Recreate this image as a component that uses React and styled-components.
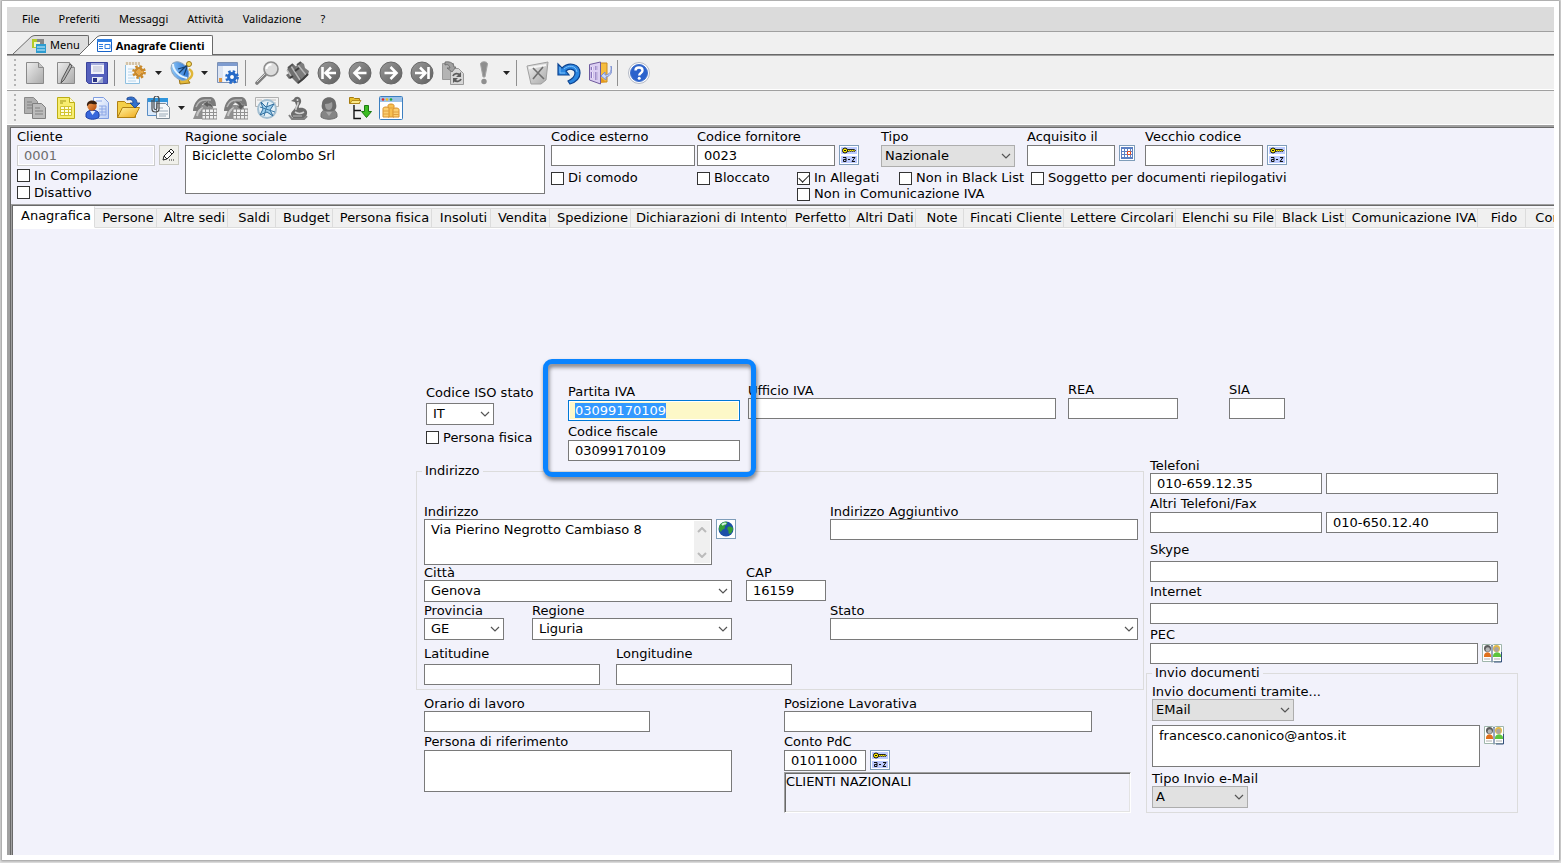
import React, { useEffect, useId, useRef } from 'react';
import styled, { createGlobalStyle, css } from 'styled-components';

const GlobalStyle = createGlobalStyle`
  * {
    box-sizing: border-box;
  }
  body {
    margin: 0;
    background: #dedede;
    color: #000;
    font-family: 'DejaVu Sans', Verdana, sans-serif;
    font-size: 13px;
    line-height: 14px;
  }
  button, input, select, textarea {
    font: inherit;
    color: inherit;
    margin: 0;
  }
`;

/* ---------- window ---------- */

const Page = styled.div`
  min-height: 100vh;
  padding: 1px 2px 3px;
  display: flex;
`;

const Frame = styled.div`
  flex: 1;
  min-width: 0;
  display: flex;
  flex-direction: column;
  padding: 6px 5px 5px;
  background: #fff;
  box-shadow: 0 0 2px 1px #9a9a9a;
`;

const MenuBar = styled.nav`
  display: flex;
  height: 25px;
  padding-left: 5px;
  background: #dbdbdb;
  border-bottom: 1px solid #a0a0a0;
`;

const MenuItem = styled.button`
  padding: 0 9px 0 10px;
  border: 0;
  background: none;
  font-family: 'Noto Sans', 'Open Sans', sans-serif;
  font-size: 11px;
`;

const DocTabs = styled.div`
  display: flex;
  align-items: flex-end;
  height: 23px;
  padding-left: 6px;
  background: #f0f0f0;
  border-bottom: 1px solid #696969;
`;

const DocTabButton = styled.button`
  display: flex;
  height: ${(p) => (p.$active ? '20px' : '19px')};
  padding: 0;
  margin-left: ${(p) => (p.$active ? '-10px' : '0')};
  margin-bottom: ${(p) => (p.$active ? '-1px' : '0')};
  border: 0;
  background: none;
  font-family: 'Noto Sans', 'Open Sans', sans-serif;
  font-size: 11px;
  font-weight: ${(p) => (p.$active ? 700 : 400)};
`;

const DocTabBody = styled.span`
  display: flex;
  align-items: center;
  gap: 4px;
  height: 100%;
  padding-right: 8px;
  white-space: nowrap;
  background: ${(p) => (p.$active ? '#fff' : '#dedede')};
  border-top: 1px solid #696969;
  border-right: 1px solid #696969;
  border-top-right-radius: 2px;

  svg {
    margin-left: -4px;
  }
`;

const Toolbar = styled.div`
  display: flex;
  align-items: center;
  height: 35px;
  padding-left: 7px;
  background: #f0f0f0;
  border-top: 1px solid #a0a0a0;
  border-bottom: 1px solid #fff;
`;

const Grip = styled.span`
  width: 2px;
  height: 27px;
  margin-right: 3px;
  background: repeating-linear-gradient(#b4b4b4 0 2px, transparent 2px 5px);
`;

const ToolButton = styled.button`
  display: flex;
  align-items: center;
  justify-content: center;
  width: ${(p) => (p.$arrow ? '15px' : '31px')};
  height: 28px;
  padding: 0;
  border: 0;
  background: none;
`;

const Separator = styled.span`
  width: 1px;
  height: 26px;
  margin: 0 5px 0 2px;
  background: #909090;
`;

const Workspace = styled.main`
  flex: 1;
  display: flex;
  flex-direction: column;
  background: #f2f2fb;
  border-top: 2px solid #a0a0a0;
  border-left: 3px solid #a0a0a0;
  box-shadow: inset 1px 1px 0 #696969;
`;

/* ---------- fields ---------- */

const FieldBox = styled.div`
  display: flex;
  flex-direction: column;
  gap: ${(p) => p.$gap || 0}px;
  margin-top: ${(p) => p.$top || 0}px;
  margin-left: ${(p) => p.$left || 0}px;
`;

const Label = styled.label`
  white-space: nowrap;
`;

const Line = styled.div`
  display: flex;
  align-items: flex-start;
  gap: 4px;
`;

const boxed = css`
  width: ${(p) => p.$w}px;
  padding: 0 6px;
  border: 1px solid #7a7a7a;
  border-radius: 0;
  background: #fff;
  outline: none;
`;

const TextInput = styled.input`
  ${boxed}
  height: 21px;

  &:disabled {
    color: #6d6d6d;
    background: #f2f2fb;
    border-color: #cccccc;
    box-shadow: inset 0 0 0 1px #fff;
  }
  &:focus {
    background: #fdf8c8;
    border-color: #0078d7;
    box-shadow: inset 0 0 0 1px #fff;
  }
  &::selection {
    color: #fff;
    background: #3399ff;
  }
`;

const TextArea = styled.textarea`
  ${boxed}
  display: block;
  height: ${(p) => p.$h}px;
  padding-top: 3px;
  resize: none;
  overflow: hidden;
`;

const AreaWrap = styled.div`
  position: relative;
`;

const ScrollTrack = styled.span`
  position: absolute;
  top: 2px;
  right: 2px;
  bottom: 2px;
  width: 16px;
  display: flex;
  flex-direction: column;
  align-items: center;
  justify-content: space-between;
  padding: 6px 0 5px;
  background: #f0f0f0;
`;

const SelectWrap = styled.div`
  position: relative;
  width: ${(p) => p.$w}px;

  svg {
    position: absolute;
    top: 8px;
    right: 4px;
    pointer-events: none;
  }
`;

const SelectBox = styled.select`
  appearance: none;
  display: block;
  width: 100%;
  height: 22px;
  padding: 0 16px 0 ${(p) => (p.$grey ? '3px' : '6px')};
  border: 1px solid ${(p) => (p.$grey ? '#adadad' : '#7a7a7a')};
  border-radius: 0;
  background: ${(p) => (p.$grey ? '#e1e1e1' : '#fff')};
`;

const CheckLabel = styled.label`
  display: flex;
  align-items: center;
  gap: 4px;
  height: ${(p) => p.$h || 16}px;
  margin-top: ${(p) => p.$top || 0}px;
  grid-column: ${(p) => p.$col || 'auto'};
  white-space: nowrap;
`;

const CheckInput = styled.input`
  appearance: none;
  display: grid;
  place-items: center;
  width: 13px;
  height: 13px;
  border: 1px solid #333;
  background: #fff;

  &:checked::after {
    content: '';
    width: 9px;
    height: 5px;
    border-left: 1px solid #222;
    border-bottom: 1px solid #222;
    transform: translateY(-1px) rotate(-45deg);
  }
`;

const SmallButton = styled.button`
  display: flex;
  align-items: center;
  justify-content: center;
  width: ${(p) => p.$size || 20}px;
  height: ${(p) => p.$size || 20}px;
  padding: 0;
  background: ${(p) => (p.$plain ? '#f0f0ea' : '#fff')};
  border: 1px solid ${(p) => (p.$plain ? '#c9c9c0' : '#7f9db9')};
`;

const BareButton = styled.button`
  display: flex;
  padding: 0;
  border: 0;
  background: none;
`;

/* ---------- header ---------- */

const Header = styled.section`
  display: flex;
  align-items: flex-start;
  gap: 6px;
  padding: 3px 0 0 7px;
  height: 77px;
`;

const ClientColumn = styled.div`
  width: 162px;
`;

const HeaderFields = styled.div`
  display: flex;
`;

const HeaderChecks = styled.div`
  display: grid;
  grid-template-columns: 146px 100px 102px 132px auto;
  margin-top: 3px;
`;

/* ---------- tab pages ---------- */

const TabPage = styled.section`
  flex: 1;
  display: flex;
  flex-direction: column;
  margin-left: 1px;
  border-top: 1px solid #a0a0a0;
  border-left: 1px solid #a0a0a0;
  box-shadow: inset 1px 1px 0 #696969;
  padding: 1px 0 0 1px;
  min-width: 0;
`;

const TabStrip = styled.div`
  display: flex;
  align-items: flex-end;
  height: 23px;
  overflow: hidden;
  background: #f7f7fa;
  border-bottom: 1px solid #fff;
`;

const Tab = styled.button`
  flex: none;
  width: ${(p) => p.$w}px;
  height: ${(p) => (p.$active ? '22px' : '20px')};
  padding: 0 0 ${(p) => (p.$active ? '2px' : '0')} 5px;
  border: 0;
  border-top: 1px solid ${(p) => (p.$active ? '#fff' : '#dcdcdc')};
  border-right: 1px solid #dcdcdc;
  border-bottom: 1px solid ${(p) => (p.$active ? '#fff' : '#dcdcdc')};
  background: ${(p) => (p.$active ? '#fff' : '#f0f0f0')};
  text-align: center;
  white-space: nowrap;
`;

const Form = styled.form`
  align-self: flex-end;
  width: 1102px;
  padding-top: 154px;
  margin-right: 36px;
`;

const TopRow = styled.div`
  display: flex;
  align-items: flex-start;
  padding-left: 10px;
`;

const IsoColumn = styled.div`
  width: 142px;
`;

const Highlighted = styled.div`
  position: relative;
  margin-top: 2px;

  &::after {
    content: '';
    position: absolute;
    inset: -26px -16px -16px -25px;
    border: 5px solid #0a84ff;
    border-radius: 9px;
    filter: drop-shadow(1px 3px 2px rgba(0, 0, 0, 0.5));
    pointer-events: none;
  }
`;

const Columns = styled.div`
  display: flex;
  gap: 2px;
  margin-top: -2px;
`;

const LeftColumn = styled.div`
  width: 728px;
  padding-top: 5px;
`;

const RightColumn = styled.div`
  width: 372px;
`;

const Contacts = styled.div`
  padding: 0 0 2px 4px;
`;

const Group = styled.fieldset`
  margin: 0;
  min-width: 0;
  padding: ${(p) => p.$padTop}px 5px 4px ${(p) => p.$padLeft}px;
  border: 1px solid #dcdcdc;

  legend {
    margin-left: ${(p) => (p.$padLeft > 5 ? -2 : 0)}px;
    padding: 0 3px;
  }
`;

const Row = styled.div`
  display: flex;
  align-items: flex-start;
  margin-top: ${(p) => p.$top || 0}px;
  padding-left: ${(p) => p.$indent || 0}px;
`;

const AccountName = styled.output`
  display: block;
  width: 347px;
  height: 41px;
  padding: 2px 1px;
  border: 1px solid #fff;
  border-top-color: #a0a0a0;
  border-left-color: #a0a0a0;
  box-shadow: inset 1px 1px 0 #696969, inset -1px -1px 0 #e3e3e3;
`;

/* ---------- drawings ---------- */

const Gradient = ({ id, from, to }) => (
  <linearGradient id={id} x1="0" y1="0" x2="1" y2="1">
    <stop offset="0" stopColor={from} />
    <stop offset="1" stopColor={to} />
  </linearGradient>
);

const Svg = ({ size = 24, box = 24, children }) => (
  <svg width={size} height={size} viewBox={`0 0 ${box} ${box}`} fill="none" aria-hidden="true">
    {children}
  </svg>
);

const HiddenSvg = styled.svg`
  position: absolute;
`;

const Defs = () => (
  <HiddenSvg width="0" height="0" aria-hidden="true">
    <Gradient id="grey" from="#eeeeee" to="#a9a9a9" />
    <Gradient id="dark" from="#9a9a9a" to="#5e5e5e" />
    <Gradient id="blue" from="#9ed6ff" to="#1763cc" />
    <Gradient id="gold" from="#fff3a0" to="#f0a818" />
    <Gradient id="sheet" from="#ffffff" to="#b9cdf5" />
    <Gradient id="orange" from="#f5a45c" to="#b04808" />
  </HiddenSvg>
);

const Gear = ({ x, y, color }) => (
  <g transform={`translate(${x} ${y})`}>
    <circle r="5.6" stroke={color} strokeWidth="2.6" strokeDasharray="2.4 2" />
    <circle r="3.4" stroke={color} strokeWidth="3" />
    <circle r="1.5" fill="#fff" />
  </g>
);

const Round = ({ children }) => (
  <Svg>
    <circle cx="12" cy="12" r="11" fill="url(#dark)" stroke="#686868" />
    <g stroke="#fff" strokeWidth="2.6">
      {children}
    </g>
  </Svg>
);

const Phone = ({ flip }) => (
  <Svg>
    <path d="M0 23 6 9h13l4 14z" fill="#909090" />
    <path d="M0 14C1 7 5 1 11 1h7c4 1 5 5 5 9h-6l-1-3c-4-2-7 0-9 6l-1 2H0z" fill="#7b7b7b" />
    <path d="M3 11c2-5 5-7 9-7h6" stroke="#b5b5b5" strokeWidth="1.5" />
    <path d="M4 20c1-5 3-7 6-8" stroke="#c4c4c4" strokeWidth="2" />
    <path d="M9 13h15v10H9z" fill="#f0f0f0" stroke="#8a8a8a" />
    <path d="M9 16.500h15M9 19.500h15M12.500 13v10M16.500 13v10M20.500 13v10" stroke="#909090" />
    {flip ? (
      <path d="M10 6c4-2 7 0 8 3h3l-4 5-5-4h3c-1-2-2-3-5-4z" fill="#5e5e5e" stroke="#aaa" strokeWidth=".6" />
    ) : (
      <path d="M20 13c0-4-2-6-5-6l1-3-6 4 5 4v-2c2 0 4 1 5 3z" fill="#5e5e5e" stroke="#aaa" strokeWidth=".6" />
    )}
  </Svg>
);

const icons = {
  blank: (
    <Svg>
      <path d="M3.500 1.500h12l5 5v16h-17z" fill="url(#grey)" stroke="#8a8a8a" />
      <path d="M15.500 1.500v5h5" fill="#c4c4c4" stroke="#8a8a8a" />
    </Svg>
  ),
  edit: (
    <Svg>
      <path d="M3.500 1.500h12l5 5v16h-17z" fill="url(#grey)" stroke="#8a8a8a" />
      <path d="M15.500 1.500v5h5" fill="#d8d8d8" stroke="#8a8a8a" />
      <path d="M16 3 8 18l-1 4 3-3 8-14z" fill="#b5b5b5" stroke="#555" />
    </Svg>
  ),
  save: (
    <Svg>
      <path d="M1.500 1.500h21v21H3.500l-2-2z" fill="#5560bd" stroke="#3a439a" />
      <path d="M6 2h13v11H6z" fill="#f3f3fa" />
      <path d="M6 2h13v2H6z" fill="#a5aede" />
      <path d="M8 6h9M8 8h9M8 10h9" stroke="#b6bbd2" />
      <path d="M7 16h11v6H7z" fill="#e8ebf4" />
      <path d="m12 22 6-6v6z" fill="#9aa6cf" />
      <path d="M8 17h4v4H8z" fill="#2b3484" />
    </Svg>
  ),
  noteGear: (
    <Svg>
      <path d="M1.500 2.500h14v20h-14z" fill="#f4faff" stroke="#8fc0e0" />
      <path d="M1 1h15v3H1z" fill="#efe9dc" />
      <path d="M3 1v3M6 1v3M9 1v3M12 1v3M15 1v3" stroke="#b79d76" />
      <path d="M4 8h7M4 11h4M4 14h5M4 17h7M4 20h8" stroke="#b6d4ea" />
      <Gear x={15} y={11} color="#c98a2c" />
      <path d="M15 8v6M12 11h7" stroke="#e8a848" strokeWidth="2" />
    </Svg>
  ),
  satellite: (
    <Svg>
      <path d="M9 17h8l3 5-10 1z" fill="#e3b93a" stroke="#9c7516" />
      <path d="M19 8c5 3 4 9-3 11" stroke="#e0b638" strokeWidth="2.400" />
      <ellipse cx="10" cy="10" rx="7.500" ry="10.500" transform="rotate(-42 10 10)" fill="url(#blue)" stroke="#8fa6bd" />
      <path d="M3 3c0 6 6 13 14 14" stroke="#e3f3ff" strokeWidth="2" />
      <path d="m9 12 9-9M18 5l-10 3M17 6l-3 8" stroke="#17406e" strokeWidth="1.200" />
      <circle cx="19" cy="3" r="2.500" fill="#f7dd60" stroke="#9c7516" />
    </Svg>
  ),
  windowGear: (
    <Svg>
      <path d="M1.500 1.500h20v20h-20z" fill="#f2f6fc" stroke="#7c91b5" />
      <path d="M2 2h19v3H2z" fill="#7e9cd0" />
      <path d="M2 5h5v16H2z" fill="#dde5f3" />
      <path d="M3 18h3M3 20h3" stroke="#e39b47" strokeWidth="2" />
      <Gear x={16} y={16} color="#2469c8" />
    </Svg>
  ),
  search: (
    <Svg>
      <path d="m10 14-8 8" stroke="#7e7e7e" strokeWidth="3.600" strokeLinecap="round" />
      <path d="m10 13-8 8" stroke="#d4d4d4" />
      <circle cx="16" cy="8" r="7" fill="#dcdcdc" stroke="#8c8c8c" strokeWidth="1.600" />
      <path d="M11.500 8c0-3 2.500-4.500 5-4.500" stroke="#fff" strokeWidth="2" />
    </Svg>
  ),
  binoculars: (
    <Svg>
      <path d="m1 8 6-5 6 5-1 3 5 8-5 4-6-6-3 1-3-4 3-2z" fill="#6f6f6f" />
      <path d="m10 5 5-4 3 2 1 4 4 3-1 4-5 5-7-8z" fill="#7d7d7d" />
      <path d="m1 9 4 6M5 5l9 14M12 4l8 10" stroke="#b8b8b8" strokeWidth="1.400" />
      <path d="m9 10 4-3M7 15l-3 2M12 22l5-4M17 18l5-5" stroke="#3f3f3f" strokeWidth="2" />
      <path d="m2 7 5-4M11 4l4-3" stroke="#555" strokeWidth="2" />
    </Svg>
  ),
  first: (
    <Round>
      <path d="M5.500 6v12M19 12H9M14 6.500 8.500 12l5.500 5.500" />
    </Round>
  ),
  prev: (
    <Round>
      <path d="M18.500 12H7M12.500 6 6.500 12l6 6" />
    </Round>
  ),
  next: (
    <Round>
      <path d="M5.500 12H17M11.500 6l6 6-6 6" />
    </Round>
  ),
  last: (
    <Round>
      <path d="M18.500 6v12M5 12h10M10 6.500l5.500 5.500-5.500 5.500" />
    </Round>
  ),
  copyRefresh: (
    <Svg>
      <path d="M1.500 2.500h11v16h-11z" fill="#b4b4b4" stroke="#999" />
      <path d="M9.500 7.500h8l5 5v11h-13z" fill="#d6d6d6" stroke="#999" />
      <path d="M4 1c6-1 9 2 9 5h2l-4 5-5-4h3C8 4 7 3 4 4z" fill="#a0a0a0" stroke="#666" strokeWidth=".8" />
      <path d="M12 15c1-3 5-3 7-1M20 18c-1 3-5 3-7 1" stroke="#5c5c5c" strokeWidth="1.800" />
      <path d="m20 11v5h-5zM12 22v-5h5z" fill="#5c5c5c" />
    </Svg>
  ),
  alert: (
    <Svg>
      <path d="M8.500 3c0-3 7-3 7 0l-2.500 13h-2z" fill="#8e8e8e" stroke="#a5a5a5" />
      <circle cx="12" cy="20.500" r="2.700" fill="#8e8e8e" />
    </Svg>
  ),
  remove: (
    <Svg>
      <path d="m1 5 21-4-2 18-5 4H5z" fill="url(#grey)" stroke="#a0a0a0" />
      <path d="m3 7 17-3" stroke="#f5f5f5" strokeWidth="2" />
      <path d="m7 7 11 11M17 6 7 18" stroke="#6e6e6e" strokeWidth="1.600" />
    </Svg>
  ),
  undo: (
    <Svg>
      <path d="M1 3v11h11l-3-4c3-3 9-2 9 2 0 4-3 6-7 8l2 3c6-2 10-6 10-11C23 3 12 0 5 7z" fill="#2b86e0" stroke="#0c4390" strokeWidth="1.200" />
      <path d="M3 6v6h5M7 8c4-4 12-4 13 3" stroke="#7fc0fa" />
    </Svg>
  ),
  door: (
    <Svg>
      <path d="M12 2h7v19h-7z" fill="#f6bd3e" stroke="#c98a20" />
      <path d="m12 22 6-1-6-5z" fill="#e59a1c" />
      <path d="m1.500 3.500 11-2.500v22l-11-4z" fill="#dccff2" stroke="#6f5a9e" />
      <path d="M4 6v3M8.500 5v4M4 11v6M8.500 11v8" stroke="#8a75bd" strokeWidth="2.400" />
      <path d="M4.500 6v3M9 5v4M4.500 11v6M9 11v8" stroke="#efe8fb" />
      <path d="M23 5c1 6-2 9-6 9v-3l-4 4 5 4v-3c5-1 7-6 5-11z" fill="#c9d8fa" stroke="#7c8fd0" />
    </Svg>
  ),
  help: (
    <Svg>
      <circle cx="12" cy="12" r="10.500" fill="#fff" stroke="#b3b9c6" />
      <circle cx="12" cy="12" r="8.500" fill="#2b62cc" stroke="#3f70cc" />
      <path d="M8.500 9.500c0-4 7-4 7 0 0 2.500-3.300 2.500-3.300 5" stroke="#fff" strokeWidth="2.400" />
      <circle cx="12.200" cy="17.300" r="1.500" fill="#fff" />
    </Svg>
  ),
  copy: (
    <Svg>
      <path d="M1.500 1.500h9l4 4v12h-13z" fill="#b0b0b0" stroke="#8a8a8a" />
      <path d="M4 6h5M4 9h7M4 12h5" stroke="#808080" />
      <path d="M9.500 7.500h9l4 4v11h-13z" fill="#bcbcbc" stroke="#808080" />
      <path d="M12 12h5M12 15h8M12 18h8" stroke="#808080" />
    </Svg>
  ),
  yellowSheet: (
    <Svg>
      <path d="M3.500 1.500h12l5 5v16h-17z" fill="#f8ee70" stroke="#bcae16" />
      <path d="M15.500 1.500v5h5" fill="#fffbd0" stroke="#bcae16" />
      <path d="M6 5h6M6 7h3" stroke="#a09618" />
      <path d="M6.500 10.500h11v9h-11zM6 13.500h12M6 16.500h12M10.500 10v10M14.500 10v10" stroke="#d2c430" fill="#fffde0" />
    </Svg>
  ),
  personSheet: (
    <Svg>
      <path d="M8.500 1.500h10l5 5v16h-15z" fill="url(#sheet)" stroke="#7f9de0" />
      <path d="M11 5h6M14 10h7v9h-7M17 10v9M14 13h7M14 16h7" stroke="#8ea8e6" />
      <path d="M1 21v-3c0-5 13-5 13 0v3c-3 3-10 3-13 0z" fill="#3868dc" stroke="#1c3ea4" />
      <path d="m5 15 2.500 4 3-4z" fill="#e6f0ff" />
      <circle cx="7" cy="10" r="4.700" fill="url(#orange)" />
      <path d="M2 10c-1-7 10-7 10-2-3 1-6-1-8 0-1 1-1 2-2 2z" fill="#3a2010" />
    </Svg>
  ),
  folder: (
    <Svg>
      <path d="M1.500 5.500h7l2 2h9v14h-18z" fill="#f4cf48" stroke="#b08012" />
      <path d="m1.500 21.500 5-10h17l-5 10z" fill="url(#gold)" stroke="#b08012" />
      <path d="M11 2c6-3 10 1 10 5h3l-5 5-5-5h3c0-3-2-4-6-3z" fill="#3270cc" stroke="#173f8c" strokeWidth=".8" />
    </Svg>
  ),
  attach: (
    <Svg>
      <path d="M.5 2.500h20v17H.5z" fill="#dceafa" stroke="#5a8ec4" />
      <path d="M1 2h20v4H1z" fill="#2f95dc" />
      <path d="M9.500 7.500h9l4 4v11h-13z" fill="#f6f8fa" stroke="#7f8c98" />
      <path d="M12 12h4M12 15h9M12 18h9M12 20h7" stroke="#9aaab8" />
      <path d="M5 4v9c0 4 7 4 7 0V3c0-4-5-4-5 0v9c0 2 3 2 3 0V5" stroke="#4a4a4a" strokeWidth="1.200" />
    </Svg>
  ),
  phoneOut: <Phone />,
  phoneIn: <Phone flip />,
  compass: (
    <Svg>
      <path d="M.5 1.500h23v9H.5z" fill="#f3f3f3" stroke="#b0b0b0" />
      <path d="M2 4h5M9 4h12M20 6v4" stroke="#bdbdbd" />
      <circle cx="12" cy="13" r="9" fill="#e3f0f8" stroke="#a3bfd2" strokeWidth="2" />
      <path d="m6 6 5 5 8-3-4 6 3 6-6-4-7 3 3-6z" fill="#9accec" stroke="#2f6c9c" />
      <path d="m9 20 4-14M5 11l15 5" stroke="#3a7aa8" strokeWidth="1" />
    </Svg>
  ),
  goose: (
    <Svg>
      <path d="M5 5 8 3c1-3 6-3 7 1 1 4-3 5-2 8 5-1 9 2 8 6-1 3-4 5-8 5-5 0-8-1-8-5 0-3 5-5 5-9l-1-3z" fill="#6c6c6c" />
      <path d="M12 6c1 3-3 5-2 8M9 16c3 2 6 2 9 0" stroke="#d0d0d0" strokeWidth="1.600" />
      <path d="m3 19 3 4h12l3-3" stroke="#808080" strokeWidth="2" />
      <path d="M7 20h9" stroke="#bbb" />
      <circle cx="11.500" cy="4" r="1" fill="#ddd" />
    </Svg>
  ),
  person: (
    <Svg>
      <path d="M4 21v-2c0-4 3-5 5-5h6c2 0 5 1 5 5v2c-4 3-12 3-16 0z" fill="#858585" stroke="#6c6c6c" />
      <path d="M5 8c0-9 14-9 14 0 1 3 0 6-3 7H8C5 14 4 11 5 8z" fill="#6c6c6c" />
      <path d="M8 8c3 0 5-1 7-2 1 4 0 8-3 8s-4-3-4-6z" fill="#9c9c9c" />
      <path d="m9 16 3 4 3-4" fill="#aaa" />
    </Svg>
  ),
  tree: (
    <Svg>
      <path d="M1.500 1.500h4l1 1h5v5h-10z" fill="#e8c030" stroke="#a67c10" />
      <path d="M2 7.500l2-3h9l-2 3z" fill="#fbe888" stroke="#a67c10" strokeWidth=".8" />
      <path d="M6 9v13.500h7M6 14.500h7" stroke="#111" strokeWidth="1.400" />
      <path d="M16.500 9.500h4v6h3l-5 6-5-6h3z" fill="#3cbc22" stroke="#1d7a10" />
    </Svg>
  ),
  coins: (
    <Svg>
      <rect x=".5" y=".5" width="23" height="23" rx="1" fill="#fff" stroke="#3c7fc0" />
      <path d="M1 1h22v5H1z" fill="#9cc2e8" />
      <circle cx="4" cy="3.500" r="1.300" fill="#e02424" />
      <circle cx="8" cy="3.500" r="1.300" fill="#f0c020" />
      <circle cx="12" cy="3.500" r="1.300" fill="#20a838" />
      <path d="M9 9.500c0-2 6-2 6 0V21H9z" fill="#f8c050" stroke="#d8902c" />
      <path d="M4 12.500c0-2 6-2 6 0V21H4zM14 13.500c0-2 6-2 6 0V21h-6z" fill="#fbcf72" stroke="#d8902c" />
      <path d="M4 15h6M4 18h6M14 16h6M14 18.500h6M10 12h4" stroke="#e0a040" />
    </Svg>
  ),
};

const ArrowDown = () => (
  <svg width="7" height="4" viewBox="0 0 7 4" aria-hidden="true">
    <path d="M0 0h7L3.500 4z" fill="#222" />
  </svg>
);

const Chevron = ({ up, color = '#555', weight = 1.2 }) => (
  <svg width="10" height="6" viewBox="0 0 10 6" fill="none" aria-hidden="true">
    <path d={up ? 'M1 5l4-4 4 4' : 'M1 1l4 4 4-4'} stroke={color} strokeWidth={weight} />
  </svg>
);

const KeyIcon = () => (
  <svg width="16" height="16" viewBox="0 0 16 16" fill="none" aria-hidden="true">
    <path d="M0 0h16v7H0zM0 9h16v7H0z" fill="#bccbff" />
    <circle cx="4" cy="3.500" r="2.500" fill="#ffee00" stroke="#111" />
    <path d="M6.500 2.500H13l1.500 1-1 1-1-.5-1 .5-1-.5-1 .5-1-.5-1 .5h-1z" fill="#ffee00" stroke="#111" strokeWidth=".9" />
    <path d="M3 3h2v1H3z" fill="#111" />
    <path d="M2 10.500h3v4H2.500v-2H5M7 12.500h2M11 10.500h3l-3 4h3" stroke="#111" />
  </svg>
);

const PencilIcon = () => (
  <Svg size={16} box={16}>
    <path d="m2 13 1-4 7-7 3 3-7 7zM8 4l3 3M3 9l3 3" stroke="#222" fill="#fff" />
    <path d="M8 13h1M10 13h1M12 13h1" stroke="#222" />
  </Svg>
);

const CalendarIcon = () => (
  <Svg size={12} box={12}>
    <path d="M0 0h12v12H0z" fill="#5d80c2" />
    <path d="M1 2h2v2H1zM4 2h2v2H4zM7 2h2v2H7zM1 5h2v2H1zM4 5h2v2H4zM1 8h2v2H1zM4 8h2v2H4zM7 8h2v2H7zM10 2h1v2h-1zM10 5h1v2h-1zM10 8h1v2h-1z" fill="#fff" />
    <path d="M6.500 4.500h3v3h-3z" fill="#fff" stroke="#e04a20" />
  </Svg>
);

const GlobeIcon = () => (
  <Svg size={16} box={16}>
    <circle cx="8" cy="8" r="7.500" fill="#1c50a8" />
    <path d="M1 6c1-4 5-6 8-5 1 2-1 3-2 4s1 2-1 3-2 1-3 3C1 10 1 8 1 6zM10 6c2-1 4 0 5 1 0 3-2 6-4 6-1-2 0-3-1-4s-1-2 0-3z" fill="#36a036" />
    <path d="M4 4c1-1 3-2 4-1" stroke="#cdf0e0" strokeWidth="2" />
  </Svg>
);

const BookIcon = () => (
  <Svg size={20} box={20}>
    <path d="M.5 1.500h8l1.500 1 1.500-1h8v17H11l-1 1-1-1H.5z" fill="#fff" stroke="#9fb6ab" />
    <path d="M10 2v17M12 19h7.500V9" stroke="#35507c" />
    <path d="M2 13c0-5 7-5 7 0v1H2z" fill="#e0701c" />
    <path d="M11 13c0-5 8-5 8 0v1h-8z" fill="#5cc43c" />
    <circle cx="5.500" cy="5.500" r="3.500" fill="#5c5c5c" />
    <circle cx="5.800" cy="6.500" r="2.200" fill="#b5b5b5" />
    <circle cx="14.500" cy="5.500" r="3.500" fill="#e0b848" />
    <circle cx="14.500" cy="6.500" r="2.400" fill="#a9a49e" />
    <path d="M2 16h6M12 16h6" stroke="#b0b0b0" />
  </Svg>
);

const MenuTabIcon = () => (
  <Svg size={15} box={15}>
    <path d="M1 1h7v9H1z" fill="#b4cc28" />
    <path d="M6 1h7v6H6z" fill="#878787" />
    <path d="M3 4h6v5H3z" fill="#eef3d0" />
    <path d="M5 6h10v9H5z" fill="#2d9cd0" />
    <path d="M6 9h8M6 12h8" stroke="#d3f0ff" />
  </Svg>
);

const FormTabIcon = () => (
  <Svg size={15} box={15}>
    <path d="M.5 1.500h14v12H.5z" fill="#fff" stroke="#1763c8" />
    <path d="M0 1h15v3H0z" fill="#2f7ee0" />
    <path d="M2 6.500h4M2 8.500h4M2 10.500h4M8 6.500h5v4H8z" stroke="#2f7ee0" />
  </Svg>
);

/* ---------- composed controls ---------- */

const Field = ({ label, w, gap, top, left, side, h, ...rest }) => {
  const id = useId();
  return (
    <FieldBox $gap={gap} $top={top} $left={left}>
      <Label htmlFor={id}>{label}</Label>
      <Line>
        {h ? <TextArea id={id} $w={w} $h={h} {...rest} /> : <TextInput id={id} $w={w} {...rest} />}
        {side}
      </Line>
    </FieldBox>
  );
};

const Select = ({ label, w, gap, top, left, value, grey }) => {
  const id = useId();
  return (
    <FieldBox $gap={gap} $top={top} $left={left}>
      <Label htmlFor={id}>{label}</Label>
      <SelectWrap $w={w}>
        <SelectBox id={id} $grey={grey} defaultValue={value}>
          <option>{value}</option>
        </SelectBox>
        <Chevron />
      </SelectWrap>
    </FieldBox>
  );
};

const Check = ({ label, checked, ...rest }) => (
  <CheckLabel {...rest}>
    <CheckInput type="checkbox" defaultChecked={checked} />
    {label}
  </CheckLabel>
);

const KeyButton = () => (
  <SmallButton type="button" aria-label="Cerca">
    <KeyIcon />
  </SmallButton>
);

const BookButton = () => (
  <BareButton type="button" aria-label="Rubrica">
    <BookIcon />
  </BareButton>
);

const AddressField = () => {
  const id = useId();
  return (
    <FieldBox>
      <Label htmlFor={id}>Indirizzo</Label>
      <Line>
        <AreaWrap>
          <TextArea id={id} $w={288} $h={46} defaultValue="Via Pierino Negrotto Cambiaso 8" />
          <ScrollTrack>
            <Chevron up color="#bbb" weight={2} />
            <Chevron color="#bbb" weight={2} />
          </ScrollTrack>
        </AreaWrap>
        <SmallButton type="button" aria-label="Mappa">
          <GlobeIcon />
        </SmallButton>
      </Line>
    </FieldBox>
  );
};

const Tools = ({ items }) => (
  <Toolbar>
    <Grip />
    {items.map((item, i) => {
      if (item === '|') return <Separator key={i} />;
      if (item === 'v')
        return (
          <ToolButton key={i} $arrow aria-label="Altro">
            <ArrowDown />
          </ToolButton>
        );
      return (
        <ToolButton key={i} aria-label={item}>
          {icons[item]}
        </ToolButton>
      );
    })}
  </Toolbar>
);

const DocTab = ({ label, icon, active }) => (
  <DocTabButton $active={active}>
    <svg width="22" height="100%" viewBox="0 0 22 20" preserveAspectRatio="none" aria-hidden="true">
      <path d="M0 20 18 2q2-1.500 4-1.500V20z" fill={active ? '#fff' : '#dedede'} />
      <path d="M0 20 18 2q2-1.500 4-1.500" fill="none" stroke="#696969" />
    </svg>
    <DocTabBody $active={active}>
      {icon}
      {label}
    </DocTabBody>
  </DocTabButton>
);

const menu = ['File', 'Preferiti', 'Messaggi', 'Attività', 'Validazione', '?'];

const mainTools = [
  'blank', 'edit', 'save', '|', 'noteGear', 'v', 'satellite', 'v', 'windowGear', '|',
  'search', 'binoculars', 'first', 'prev', 'next', 'last', 'copyRefresh', 'alert', 'v', '|',
  'remove', 'undo', 'door', '|', 'help',
];

const clientTools = [
  'copy', 'yellowSheet', 'personSheet', 'folder', 'attach', 'v', 'phoneOut', 'phoneIn',
  'compass', 'goose', 'person', 'tree', 'coins',
];

const tabs = [
  ['Anagrafica', 82],
  ['Persone', 62],
  ['Altre sedi', 71],
  ['Saldi', 48],
  ['Budget', 57],
  ['Persona fisica', 99],
  ['Insoluti', 59],
  ['Vendita', 59],
  ['Spedizione', 81],
  ['Dichiarazioni di Intento', 156],
  ['Perfetto', 63],
  ['Altri Dati', 66],
  ['Note', 48],
  ['Fincati Cliente', 100],
  ['Lettere Circolari', 112],
  ['Elenchi su File', 100],
  ['Black List', 70],
  ['Comunicazione IVA', 132],
  ['Fido', 48],
  ['Con', 40],
];

const App = () => {
  const vatRef = useRef(null);

  useEffect(() => {
    vatRef.current.focus();
    vatRef.current.select();
  }, []);

  return (
    <Page>
      <GlobalStyle />
      <Defs />
      <Frame>
        <MenuBar>
          {menu.map((m) => (
            <MenuItem key={m}>{m}</MenuItem>
          ))}
        </MenuBar>
        <DocTabs>
          <DocTab label="Menu" icon={<MenuTabIcon />} />
          <DocTab label="Anagrafe Clienti" icon={<FormTabIcon />} active />
        </DocTabs>
        <Tools items={mainTools} />
        <Tools items={clientTools} />

        <Workspace>
          <Header>
            <ClientColumn>
              <Field
                label="Cliente"
                w={138}
                gap={1}
                defaultValue="0001"
                disabled
                side={
                  <SmallButton $plain aria-label="Modifica">
                    <PencilIcon />
                  </SmallButton>
                }
              />
              <Check label="In Compilazione" $h={17} $top={1} />
              <Check label="Disattivo" $h={17} />
            </ClientColumn>
            <Field label="Ragione sociale" w={360} h={49} gap={1} defaultValue="Biciclette Colombo Srl" />
            <div>
              <HeaderFields>
                <Field label="Codice esterno" w={144} gap={1} />
                <Field label="Codice fornitore" w={138} left={2} gap={1} defaultValue="0023" side={<KeyButton />} />
                <Select label="Tipo" w={134} left={22} gap={1} value="Nazionale" grey />
                <Field
                  label="Acquisito il"
                  w={88}
                  left={12}
                  gap={1}
                  side={
                    <SmallButton $size={16} aria-label="Calendario">
                      <CalendarIcon />
                    </SmallButton>
                  }
                />
                <Field label="Vecchio codice" w={118} left={10} gap={1} side={<KeyButton />} />
              </HeaderFields>
              <HeaderChecks>
                <Check label="Di comodo" />
                <Check label="Bloccato" />
                <Check label="In Allegati" checked />
                <Check label="Non in Black List" />
                <Check label="Soggetto per documenti riepilogativi" />
                <Check label="Non in Comunicazione IVA" $col="3 / -1" />
              </HeaderChecks>
            </div>
          </Header>

          <TabPage>
            <TabStrip role="tablist">
              {tabs.map(([name, width], i) => (
                <Tab key={name} role="tab" aria-selected={i === 0} $active={i === 0} $w={width}>
                  {name}
                </Tab>
              ))}
            </TabStrip>

            <Form>
              <TopRow>
                <IsoColumn>
                  <Select label="Codice ISO stato" w={68} top={3} gap={3} value="IT" />
                  <Check label="Persona fisica" $h={17} $top={4} />
                </IsoColumn>
                <Highlighted>
                  <Field label="Partita IVA" w={172} gap={1} defaultValue="03099170109" ref={vatRef} />
                  <Field label="Codice fiscale" w={172} top={4} gap={1} defaultValue="03099170109" />
                </Highlighted>
                <Field label="Ufficio IVA" w={308} top={1} left={8} />
                <Field label="REA" w={110} left={12} gap={1} />
                <Field label="SIA" w={56} left={51} gap={1} />
              </TopRow>

              <Columns>
                <LeftColumn>
                  <Group $padTop={27} $padLeft={7}>
                    <legend>Indirizzo</legend>
                    <Row>
                      <AddressField />
                      <Field label="Indirizzo Aggiuntivo" w={308} left={94} />
                    </Row>
                    <Row $top={1}>
                      <Select label="Città" w={308} value="Genova" />
                      <Field label="CAP" w={80} left={14} defaultValue="16159" />
                    </Row>
                    <Row $top={2}>
                      <Select label="Provincia" w={80} value="GE" />
                      <Select label="Regione" w={200} left={28} value="Liguria" />
                      <Select label="Stato" w={308} left={98} value="" />
                    </Row>
                    <Row $top={7}>
                      <Field label="Latitudine" w={176} gap={3} />
                      <Field label="Longitudine" w={176} left={16} gap={3} />
                    </Row>
                  </Group>
                  <Row $top={7} $indent={8}>
                    <Field label="Orario di lavoro" w={226} />
                    <Field label="Posizione Lavorativa" w={308} left={134} />
                  </Row>
                  <Row $top={3} $indent={8}>
                    <Field label="Persona di riferimento" w={308} h={42} gap={1} />
                    <FieldBox $left={52} $gap={1}>
                      <Field label="Conto PdC" w={82} gap={1} defaultValue="01011000" side={<KeyButton />} />
                      <AccountName>CLIENTI NAZIONALI</AccountName>
                    </FieldBox>
                  </Row>
                </LeftColumn>

                <RightColumn>
                  <Contacts>
                    <Field
                      label="Telefoni"
                      w={172}
                      defaultValue="010-659.12.35"
                      side={<TextInput $w={172} aria-label="Telefono 2" />}
                    />
                    <Field
                      label="Altri Telefoni/Fax"
                      w={172}
                      top={3}
                      gap={1}
                      side={<TextInput $w={172} aria-label="Fax" defaultValue="010-650.12.40" />}
                    />
                    <Field label="Skype" w={348} top={10} gap={4} />
                    <Field label="Internet" w={348} top={3} gap={4} />
                    <Field label="PEC" w={328} top={4} gap={1} side={<BookButton />} />
                  </Contacts>
                  <Group $padTop={5} $padLeft={5}>
                    <legend>Invio documenti</legend>
                    <Select label="Invio documenti tramite..." w={142} value="EMail" grey />
                    <Row $top={4}>
                      <Line>
                        <TextArea $w={328} $h={42} aria-label="Indirizzo e-mail" defaultValue="francesco.canonico@antos.it" />
                        <BookButton />
                      </Line>
                    </Row>
                    <Select label="Tipo Invio e-Mail" w={96} top={5} value="A" grey />
                  </Group>
                </RightColumn>
              </Columns>
            </Form>
          </TabPage>
        </Workspace>
      </Frame>
    </Page>
  );
};

export default App;
